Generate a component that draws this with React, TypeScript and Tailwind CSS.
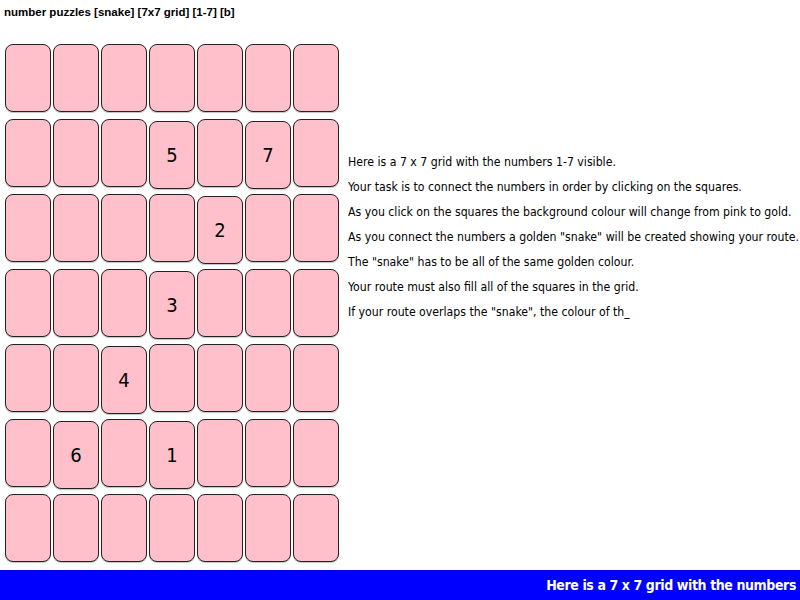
const grid: (number | null)[][] = [
  [null, null, null, null, null, null, null],
  [null, null, null, 5, null, 7, null],
  [null, null, null, null, 2, null, null],
  [null, null, null, 3, null, null, null],
  [null, null, 4, null, null, null, null],
  [null, 6, null, 1, null, null, null],
  [null, null, null, null, null, null, null],
];

const lines = [
  "Here is a 7 x 7 grid with the numbers 1-7 visible.",
  "Your task is to connect the numbers in order by clicking on the squares.",
  "As you click on the squares the background colour will change from pink to gold.",
  'As you connect the numbers a golden "snake" will be created showing your route.',
  'The "snake" has to be all of the same golden colour.',
  "Your route must also fill all of the squares in the grid.",
  'If your route overlaps the "snake", the colour of th_',
];

export default function App() {
  return (
    <div className="w-[800px] h-[600px] flex flex-col bg-white overflow-hidden">
      {/* Title */}
      <div className="h-[44px] pt-[5px] pl-[4px] text-[11.5px] leading-[15px] font-bold text-black font-['Tahoma','Liberation_Sans',sans-serif]">
        number puzzles [snake] [7x7 grid] [1-7] [b]
      </div>

      <div className="flex-1 flex">
        {/* Puzzle grid */}
        <div className="pl-[5px] grid grid-cols-[repeat(7,46px)] auto-rows-[68px] gap-x-[2px] gap-y-[7px] items-start">
          {grid.flatMap((row, r) =>
            row.map((n, c) => (
              <div
                key={`${r}-${c}`}
                className={
                  "w-[46px] h-[68px] rounded-[8px] border border-[#222] bg-[#ffc0cb] shadow-[0_1px_1px_rgba(0,0,0,0.25)] flex items-center justify-center text-[20px] text-black font-['Comic_Sans_MS','DejaVu_Sans_Condensed','DejaVu_Sans',sans-serif] " +
                  (n !== null ? "mt-[2px]" : "")
                }
              >
                {n}
              </div>
            ))
          )}
        </div>

        {/* Instructions */}
        <div className="pl-[9px] pt-[106px] text-[12.2px] leading-[25px] text-black whitespace-nowrap font-['Comic_Sans_MS','DejaVu_Sans_Condensed','DejaVu_Sans',sans-serif]">
          {lines.map((l) => (
            <div key={l}>{l}</div>
          ))}
        </div>
      </div>

      {/* Scrolling banner */}
      <div className="h-[30px] bg-[#0000ff] flex items-center justify-end pr-[4px] text-white font-bold text-[14px] tracking-[-0.4px] whitespace-nowrap font-['Comic_Sans_MS','DejaVu_Sans_Condensed','DejaVu_Sans',sans-serif]">
        Here is a 7 x 7 grid with the numbers
      </div>
    </div>
  );
}
